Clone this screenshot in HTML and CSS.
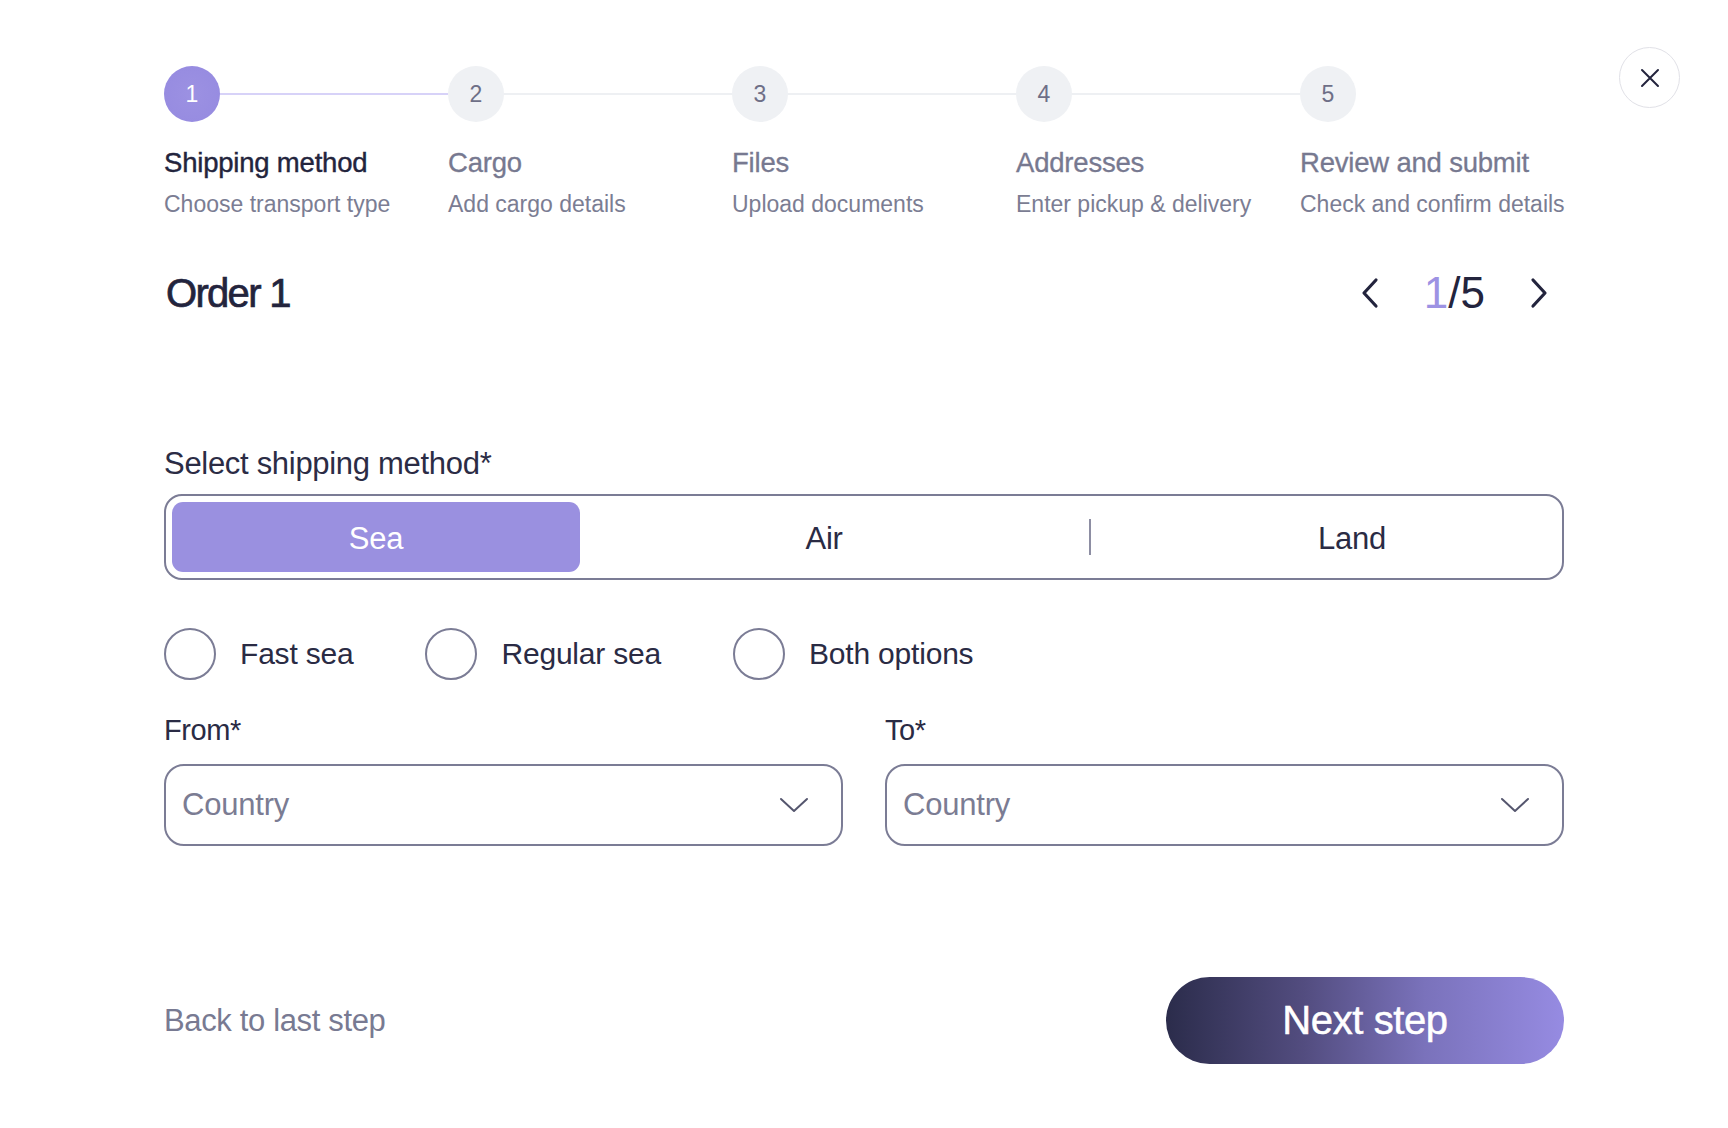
FILE: index.html
```html
<!DOCTYPE html>
<html lang="en">
<head>
<meta charset="utf-8">
<title>Shipping order</title>
<link rel="stylesheet" href="styles.css">
</head>
<body>
<button class="close" aria-label="Close">
  <svg width="20" height="20" viewBox="0 0 20 20"><path d="M2 2 L18 18 M18 2 L2 18" stroke="#23243d" stroke-width="2" stroke-linecap="round" fill="none"/></svg>
</button>
<div class="page">
  <ol class="steps">
    <li class="step active">
      <div class="step-head"><span class="num">1</span><span class="line"></span></div>
      <div class="step-title">Shipping method</div>
      <div class="step-sub">Choose transport type</div>
    </li>
    <li class="step">
      <div class="step-head"><span class="num">2</span><span class="line"></span></div>
      <div class="step-title">Cargo</div>
      <div class="step-sub">Add cargo details</div>
    </li>
    <li class="step">
      <div class="step-head"><span class="num">3</span><span class="line"></span></div>
      <div class="step-title">Files</div>
      <div class="step-sub">Upload documents</div>
    </li>
    <li class="step">
      <div class="step-head"><span class="num">4</span><span class="line"></span></div>
      <div class="step-title">Addresses</div>
      <div class="step-sub">Enter pickup &amp; delivery</div>
    </li>
    <li class="step">
      <div class="step-head"><span class="num">5</span></div>
      <div class="step-title">Review and submit</div>
      <div class="step-sub">Check and confirm details</div>
    </li>
  </ol>

  <div class="order-row">
    <h1 class="order-title">Order 1</h1>
    <div class="pager">
      <button class="pager-btn" aria-label="Previous">
        <svg width="20" height="32" viewBox="0 0 20 32"><path d="M16 3 L4 16 L16 29" stroke="#23243d" stroke-width="3.2" fill="none" stroke-linecap="round" stroke-linejoin="round"/></svg>
      </button>
      <div class="pager-count"><span class="cur">1</span>/5</div>
      <button class="pager-btn" aria-label="Next">
        <svg width="20" height="32" viewBox="0 0 20 32"><path d="M4 3 L16 16 L4 29" stroke="#23243d" stroke-width="3.2" fill="none" stroke-linecap="round" stroke-linejoin="round"/></svg>
      </button>
    </div>
  </div>

  <section class="method">
    <div class="label">Select shipping method*</div>
    <div class="seg">
      <div class="opt sel">Sea</div>
      <div class="opt air">Air</div>
      <div class="divider"></div>
      <div class="opt land">Land</div>
    </div>

    <div class="radios">
      <label class="radio"><span class="dot"></span><span class="radio-text">Fast sea</span></label>
      <label class="radio"><span class="dot"></span><span class="radio-text">Regular sea</span></label>
      <label class="radio"><span class="dot"></span><span class="radio-text">Both options</span></label>
    </div>

    <div class="route">
      <div class="field">
        <div class="field-label">From*</div>
        <div class="select">
          <span class="placeholder">Country</span>
          <svg width="30" height="16" viewBox="0 0 30 16"><path d="M2 2 L15 14 L28 2" stroke="#55566e" stroke-width="2" fill="none" stroke-linecap="round" stroke-linejoin="round"/></svg>
        </div>
      </div>
      <div class="field">
        <div class="field-label">To*</div>
        <div class="select">
          <span class="placeholder">Country</span>
          <svg width="30" height="16" viewBox="0 0 30 16"><path d="M2 2 L15 14 L28 2" stroke="#55566e" stroke-width="2" fill="none" stroke-linecap="round" stroke-linejoin="round"/></svg>
        </div>
      </div>
    </div>
  </section>

  <footer class="footer">
    <a class="back">Back to last step</a>
    <button class="next">Next step</button>
  </footer>
</div>
</body>
</html>
```

FILE: styles.css
```css
* { box-sizing: border-box; }

body {
  margin: 0;
  background: #ffffff;
  font-family: "Liberation Sans", Arial, sans-serif;
  color: #23243d;
}

button {
  font-family: inherit;
  cursor: pointer;
}

.close {
  position: absolute;
  top: 47px;
  right: 48px;
  width: 61px;
  height: 61px;
  border-radius: 50%;
  border: 1.5px solid #e1e1e7;
  background: #fff;
  display: flex;
  align-items: center;
  justify-content: center;
  padding: 0;
}

.page {
  width: 1400px;
  margin: 0 auto;
  padding-top: 66px;
}

/* Stepper */
.steps {
  list-style: none;
  margin: 0;
  padding: 0;
  display: grid;
  grid-template-columns: repeat(4, 284px) 1fr;
}

.step-head {
  display: flex;
  align-items: center;
  height: 56px;
}

.num {
  flex: none;
  width: 56px;
  height: 56px;
  border-radius: 50%;
  background: #eff1f4;
  color: #6e6f87;
  font-size: 23px;
  display: flex;
  align-items: center;
  justify-content: center;
}

.line {
  flex: 1;
  height: 2px;
  background: #eef0f3;
}

.active .num {
  background: radial-gradient(circle at 50% 50%, #9c91e2 0%, #958ae0 100%);
  color: #fff;
}

.active .line {
  background: #d7d2f8;
}

.step-title {
  margin-top: 24px;
  font-size: 27.5px;
  line-height: 34px;
  letter-spacing: -0.2px;
  color: #777990;
  white-space: nowrap;
  -webkit-text-stroke: 0.3px #777990;
}

.active .step-title {
  color: #23243d;
  -webkit-text-stroke: 0.4px #23243d;
}

.step-sub {
  margin-top: 10px;
  font-size: 23px;
  line-height: 28px;
  color: #7b7d93;
  white-space: nowrap;
}

/* Order row */
.order-row {
  margin-top: 51px;
  height: 48px;
  display: flex;
  align-items: center;
  justify-content: space-between;
}

.order-title {
  margin: 0;
  font-size: 40px;
  line-height: 48px;
  font-weight: 400;
  letter-spacing: -1.7px;
  color: #23243d;
  -webkit-text-stroke: 0.7px #23243d;
  padding-left: 2px;
}

.pager {
  display: flex;
  align-items: center;
  gap: 44px;
  margin-right: 15px;
}

.pager-btn {
  border: none;
  background: none;
  padding: 0;
  width: 20px;
  height: 32px;
  display: flex;
}

.pager-count {
  font-size: 44px;
  line-height: 48px;
  color: #23243d;
}

.pager-count .cur {
  color: #9d92e3;
}

/* Method */
.method {
  margin-top: 129px;
}

.label {
  font-size: 31px;
  line-height: 36px;
  letter-spacing: -0.3px;
  color: #2b2c45;
}

.seg {
  margin-top: 12px;
  height: 86px;
  border: 2px solid #7b7c95;
  border-radius: 18px;
  padding: 6px;
  display: grid;
  grid-template-columns: 408px 509px 2px 1fr;
  align-items: center;
}

.opt {
  height: 70px;
  display: flex;
  align-items: center;
  justify-content: center;
  font-size: 31px;
  letter-spacing: -0.3px;
  color: #2a2b44;
  padding-top: 3px;
}

.opt.sel {
  background: #9a90e0;
  color: #ffffff;
  border-radius: 11px;
}

.opt.air {
  padding-right: 21px;
}

.opt.land {
  padding-left: 57px;
}

.divider {
  width: 2px;
  height: 36px;
  background: #8d8ea3;
}

.radios {
  margin-top: 48px;
  display: flex;
  align-items: center;
  gap: 72px;
}

.radio {
  display: flex;
  align-items: center;
  gap: 24px;
}

.dot {
  width: 52px;
  height: 52px;
  border-radius: 50%;
  border: 2px solid #7b7c95;
}

.radio-text {
  font-size: 30px;
  letter-spacing: -0.2px;
  color: #2a2b44;
}

.route {
  margin-top: 33px;
  display: grid;
  grid-template-columns: 1fr 1fr;
  column-gap: 42px;
}

.field-label {
  font-size: 29px;
  line-height: 34px;
  letter-spacing: -0.4px;
  color: #2a2b44;
}

.select {
  margin-top: 17px;
  height: 82px;
  border: 2px solid #7b7c95;
  border-radius: 20px;
  display: flex;
  align-items: center;
  justify-content: space-between;
  padding: 0 32px 0 16px;
}

.placeholder {
  font-size: 31px;
  color: #7b7c93;
  letter-spacing: -0.2px;
}

/* Footer */
.footer {
  margin-top: 131px;
  display: flex;
  align-items: center;
  justify-content: space-between;
}

.back {
  font-size: 31px;
  letter-spacing: -0.35px;
  color: #787a92;
}

.next {
  width: 398px;
  height: 87px;
  border: none;
  border-radius: 44px;
  background: linear-gradient(90deg, #2b2c4b 0%, #534d80 35%, #7a72bb 65%, #968be2 100%);
  color: #ffffff;
  font-size: 40px;
  letter-spacing: -0.4px;
  -webkit-text-stroke: 0.5px #ffffff;
}
```
